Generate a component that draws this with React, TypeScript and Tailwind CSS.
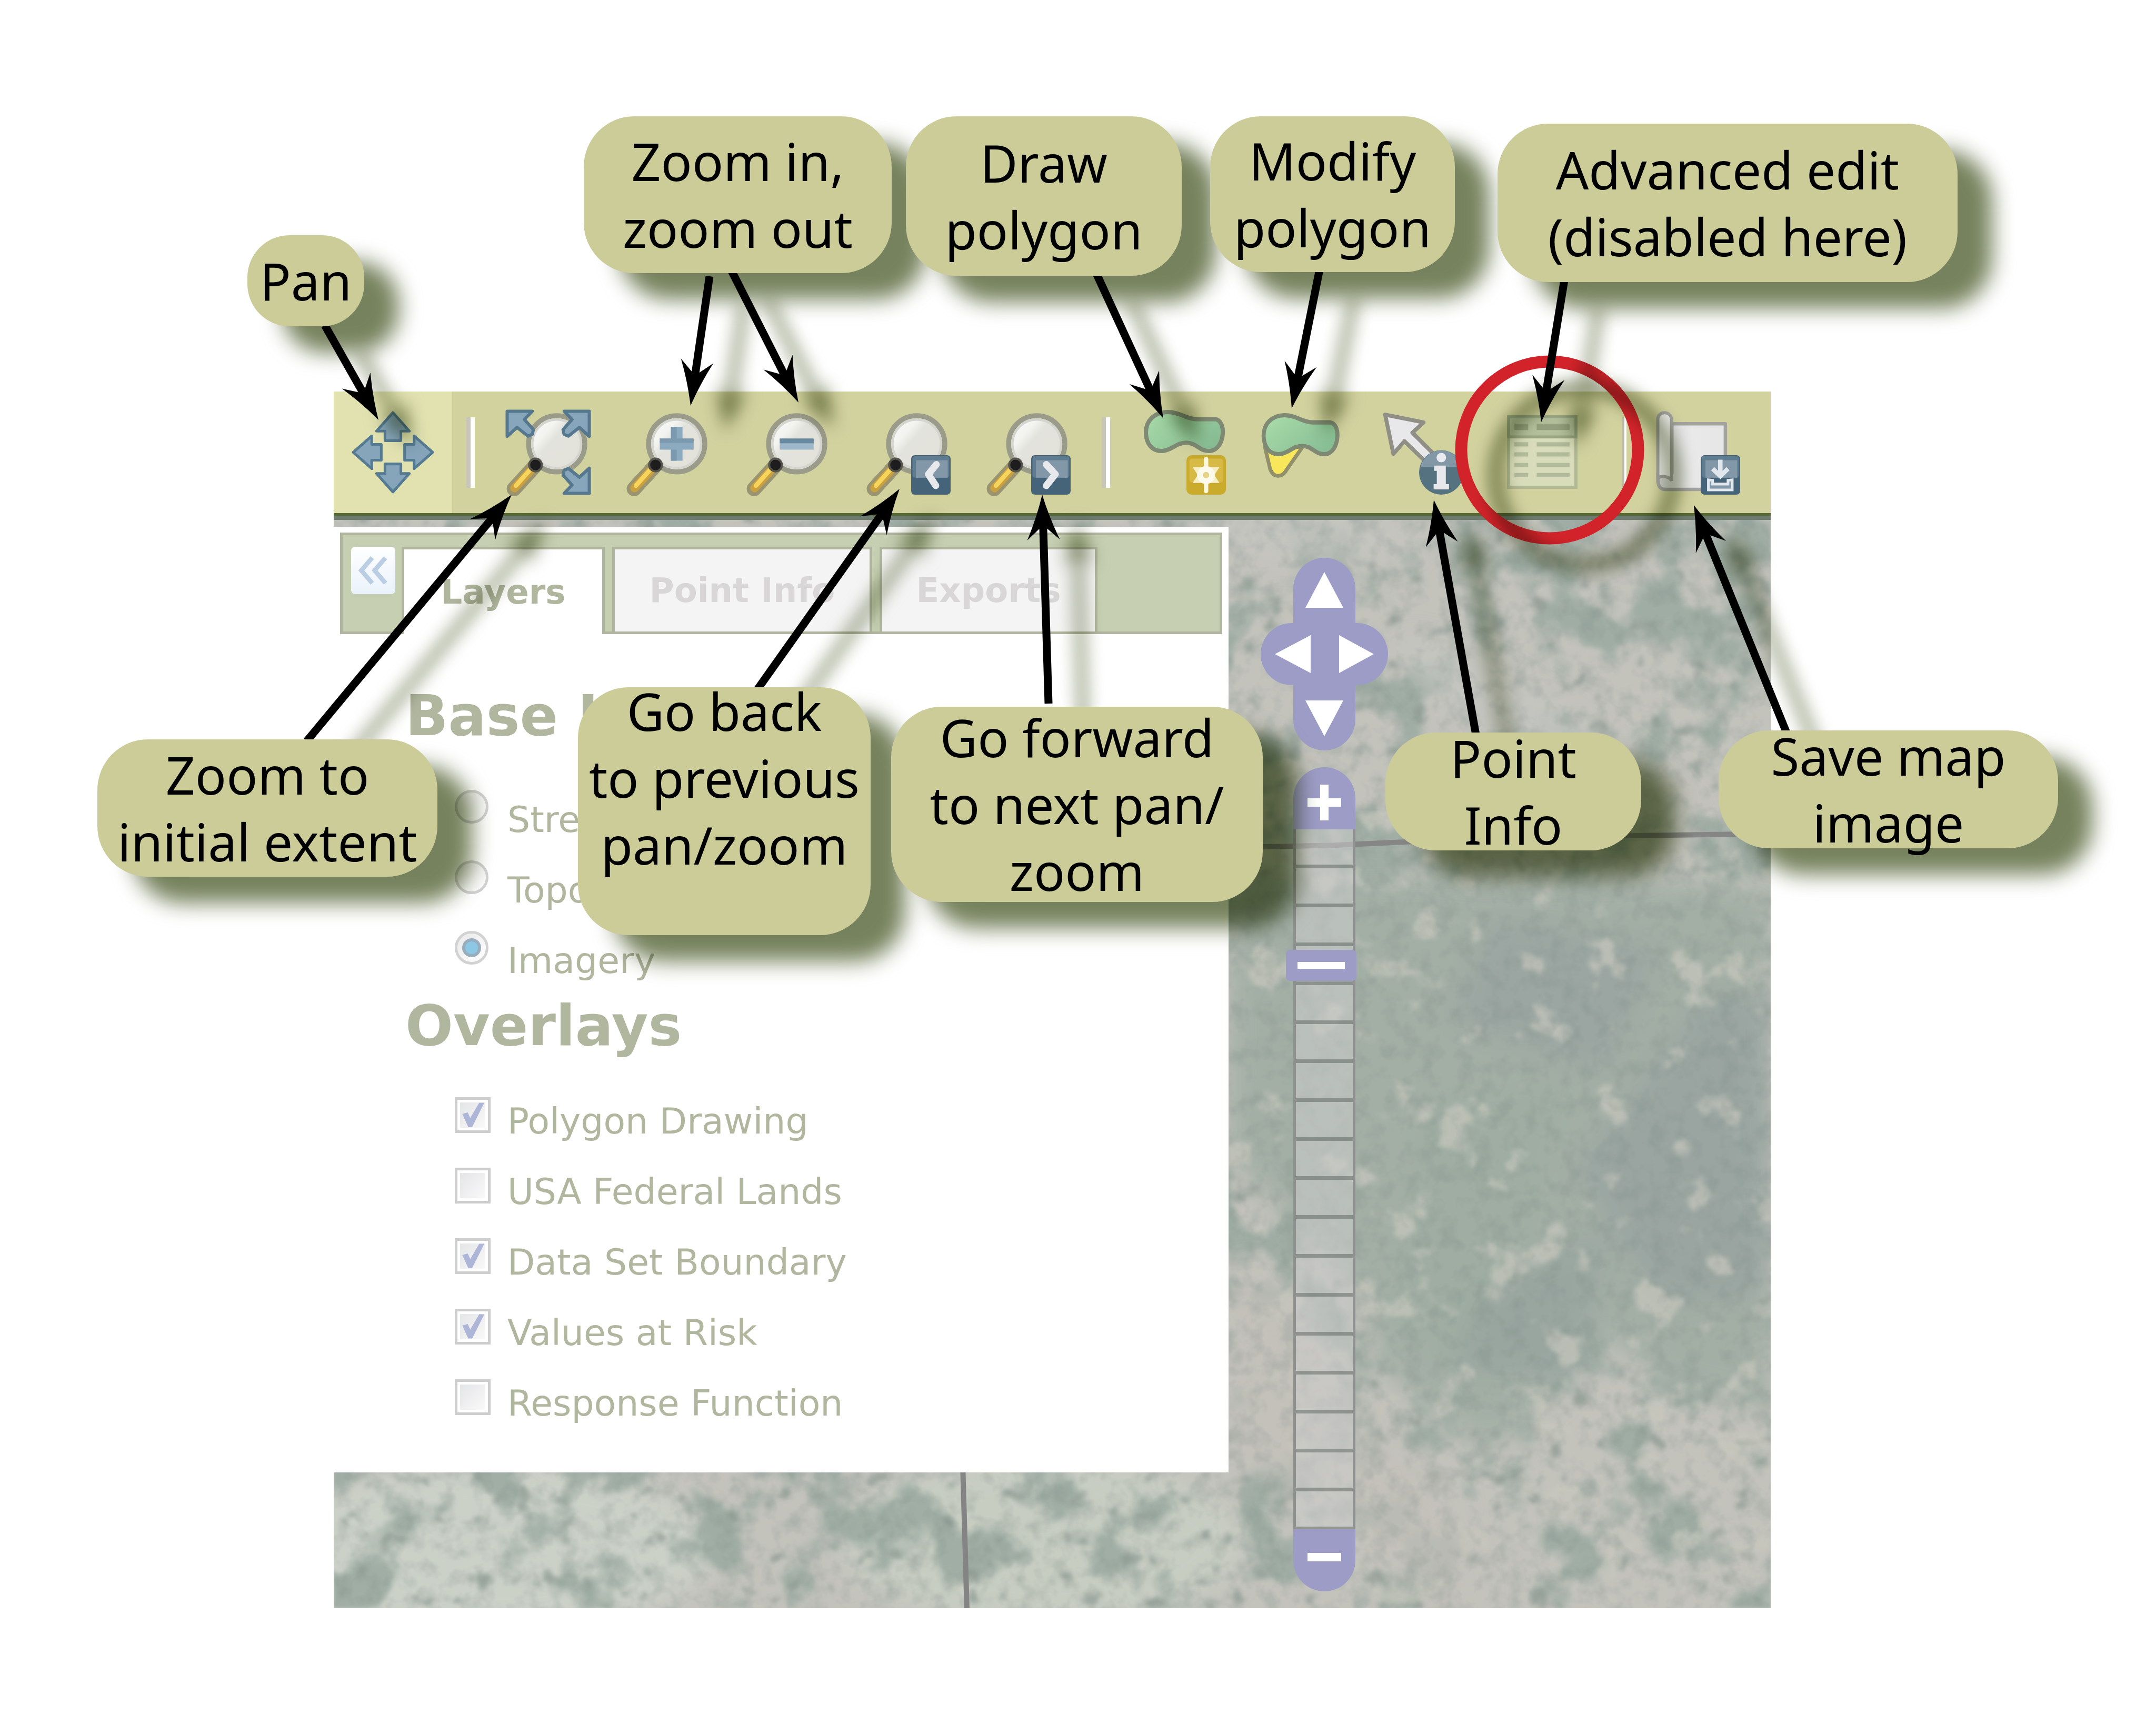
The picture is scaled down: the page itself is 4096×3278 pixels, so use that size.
import type { ReactNode } from "react";

/* ---------- toolbar icons (32 x 32 grid) ---------- */

function Icon({ children }: { children: ReactNode }) {
  return (
    <svg viewBox="0 0 32 32" className="size-[161px] overflow-visible" aria-hidden="true">
      {children}
    </svg>
  );
}

function Lens({ id }: { id: string }) {
  return (
    <>
      <defs>
        <linearGradient id={id} x1="0" y1="0.1" x2="0.9" y2="0.9">
          <stop offset="0.1" stopColor="#f6f8f6" />
          <stop offset="0.3" stopColor="#f3f4f0" />
          <stop offset="0.45" stopColor="#e2e3dc" />
          <stop offset="1" stopColor="#e2e2da" />
        </linearGradient>
      </defs>
      <path d="M10.6 21.6 L3.1 29.8" stroke="#9a9470" strokeWidth="5.6" strokeLinecap="round" />
      <path d="M9.8 22.4 L3.3 29.5" stroke="#c9a13f" strokeWidth="3.2" strokeLinecap="round" />
      <path d="M9 22.8 L3.8 28.6" stroke="#f7d45c" strokeWidth="1.7" strokeLinecap="round" />
      <circle cx="19.2" cy="12.8" r="10.6" fill={`url(#${id})`} stroke="#9b9b8a" strokeWidth="1.9" />
      <circle cx="19.2" cy="12.8" r="9.2" fill="none" stroke="#d4d5cf" strokeWidth="0.9" />
      <circle cx="11.2" cy="20.8" r="2.4" fill="#1d1d1d" stroke="#55544c" strokeWidth="0.8" />
    </>
  );
}

function PanIcon() {
  const arrow = "M16 1 L22.2 8 L19 8 L19 11.6 L13 11.6 L13 8 L9.8 8 Z";
  return (
    <Icon>
      <g fill="#86a5bb" stroke="#557b93" strokeWidth="1" strokeLinejoin="round">
        <path d={arrow} />
        <path d={arrow} transform="rotate(90 16 16)" />
        <path d={arrow} transform="rotate(180 16 16)" />
        <path d={arrow} transform="rotate(270 16 16)" />
      </g>
    </Icon>
  );
}

function ExtentIcon() {
  const corner = "M0.5 0.5 H10 L7 3.6 L10.4 7.4 L10 9.2 L8.4 9.9 L4.2 6.6 L0.5 10 Z";
  return (
    <Icon>
      <Lens id="lens-extent" />
      <g fill="#87a5bb" stroke="#55788f" strokeWidth="1.2" strokeLinejoin="round">
        <path d={corner} />
        <path d={corner} transform="translate(32 0) scale(-1 1)" />
        <path d={corner} transform="translate(32 32) scale(-1 -1)" />
      </g>
    </Icon>
  );
}

function ZoomInIcon() {
  return (
    <Icon>
      <Lens id="lens-in" />
      <path d="M17 6.4 H21.4 V10.8 H25.6 V15 H21.4 V19.2 H17 V15 H12.8 V10.8 H17 Z" fill="#8cabc1" />
      <path d="M17 6.4 H19.2 V10.8 H25.6 V12.4 H12.8 V10.8 H17 Z M17 15 H19.2 V19.2 H17 Z" fill="#7391a7" opacity="0.7" />
    </Icon>
  );
}

function ZoomOutIcon() {
  return (
    <Icon>
      <Lens id="lens-out" />
      <rect x="12.8" y="10.8" width="12.8" height="4.2" fill="#9fb8ca" />
      <rect x="12.8" y="10.8" width="12.8" height="1.8" fill="#68899f" />
    </Icon>
  );
}

function BadgeBox() {
  return (
    <>
      <rect x="17.1" y="17.1" width="14.9" height="14.9" rx="1.4" fill="#466479" />
      <rect x="17.6" y="17.4" width="13.9" height="8.2" rx="1" fill="#5f7c90" />
      <rect x="18.9" y="19" width="12" height="6.6" fill="#8298a8" />
    </>
  );
}

function PreviousIcon() {
  return (
    <Icon>
      <Lens id="lens-previous" />
      <BadgeBox />
      <path d="M26.6 20.6 L23.6 24.3 L26.4 28.6" fill="none" stroke="#e8e9ec" strokeWidth="2.6" strokeLinecap="round" strokeLinejoin="round" />
    </Icon>
  );
}

function NextIcon() {
  return (
    <Icon>
      <Lens id="lens-next" />
      <BadgeBox />
      <path d="M22.8 20.6 L26.2 24.3 L22.8 28.6" fill="none" stroke="#e8e9ec" strokeWidth="2.6" strokeLinecap="round" strokeLinejoin="round" />
    </Icon>
  );
}

const blob =
  "M1.8 9 C1.6 4 5 0.9 10 0.8 C14.6 0.8 17 3.4 21 3.5 L28 3.5 C30.4 3.8 31 7 30.8 9 C30.6 12 29 15.3 26 15.5 C22 15.7 21 12.4 17 12.4 C13 12.4 12 15.1 8 15.5 C4 15.7 2 12.6 1.8 9 Z";

function DrawPolygonIcon() {
  return (
    <Icon>
      <defs>
        <linearGradient id="blob-draw" x1="0" y1="0" x2="1" y2="0.6">
          <stop offset="0" stopColor="#a9dba9" />
          <stop offset="1" stopColor="#88bd94" />
        </linearGradient>
      </defs>
      <path d={blob} fill="url(#blob-draw)" stroke="#7f8a74" strokeWidth="1.6" />
      <rect x="17.1" y="17.1" width="14.9" height="14.9" rx="2" fill="#cbab2b" />
      <rect x="18.2" y="18.4" width="12.7" height="9" rx="1" fill="#dcc152" opacity="0.7" />
      <path d="M24.5 18.6 V30.6" stroke="#fbf7dc" strokeWidth="1.7" strokeLinecap="round" />
      <path d="M19.4 21.6 H29.6 L27.6 24.6 L29.6 27.6 H19.4 L21.4 24.6 Z" fill="#f6efc4" />
      <circle cx="24.5" cy="24.6" r="3.4" fill="#fcfaea" />
      <circle cx="24.5" cy="24.6" r="1.2" fill="#e4d287" />
    </Icon>
  );
}

function ModifyPolygonIcon() {
  return (
    <Icon>
      <defs>
        <linearGradient id="blob-modify" x1="0" y1="0" x2="1" y2="0.6">
          <stop offset="0" stopColor="#abdcaa" />
          <stop offset="1" stopColor="#88bf95" />
        </linearGradient>
      </defs>
      <path d="M1.4 14 L3.4 22.4 Q4.4 24.9 6.4 24.9 Q8.4 24.9 9.6 22.6 L15.6 14 Z" fill="#f8e75a" stroke="#92906a" strokeWidth="1.4" strokeLinejoin="round" />
      <path d={blob} transform="translate(-0.8 1.2) scale(0.96 1)" fill="url(#blob-modify)" stroke="#7f8a74" strokeWidth="1.6" />
    </Icon>
  );
}

function PointInfoIcon() {
  return (
    <Icon>
      <path d="M1.5 1.8 L16 4.7 L11.8 8.6 L20.6 17.4 L17.6 20.4 L8.8 11.8 L4.6 16.6 Z" fill="#e8e8ea" stroke="#908f86" strokeWidth="1.5" strokeLinejoin="round" />
      <circle cx="22.7" cy="23.6" r="8.4" fill="#54727f" />
      <path d="M14.8 21.6 A8.1 8.1 0 0 1 30.6 21.6 Z" fill="#8298a6" />
      <circle cx="22.7" cy="18" r="1.8" fill="#e9ebef" />
      <path d="M20 21 H24.4 V28 H25.6 V30 H19.8 V28 H21 V23 H20 Z" fill="#e6e8ec" />
    </Icon>
  );
}

function TableIcon() {
  return (
    <Icon>
      <g transform="translate(-0.4 0)">
        <rect x="3.2" y="2.6" width="25.4" height="26.6" fill="#d9dcba" stroke="#b0b894" strokeWidth="1.2" />
        <rect x="3.2" y="2.6" width="25.4" height="7.6" fill="#b4c09c" stroke="#98a582" strokeWidth="1.1" />
        <g fill="#93a07e">
          <rect x="5.4" y="5.2" width="5.2" height="2.4" />
          <rect x="13.8" y="5.2" width="12.4" height="2.4" />
        </g>
        <g fill="#b1ba9b">
          {[12.2, 16, 20, 23.8].map((y) => (
            <g key={y}>
              <rect x="5.4" y={y} width="5.2" height="1.6" />
              <rect x="13.8" y={y} width="12.4" height="1.6" />
            </g>
          ))}
        </g>
      </g>
    </Icon>
  );
}

function SaveImageIcon() {
  return (
    <Icon>
      <defs>
        <linearGradient id="sheet" x1="0" y1="0" x2="1" y2="0">
          <stop offset="0" stopColor="#d2d2d3" />
          <stop offset="0.5" stopColor="#e9e9ea" />
          <stop offset="1" stopColor="#e6e6e6" />
        </linearGradient>
      </defs>
      <path d="M3.6 30 C1.6 30 0.9 28.4 0.9 26 V24 H6.2 V5.2 H26.4 V30 Z" fill="url(#sheet)" stroke="#a3a3a0" strokeWidth="1.3" strokeLinejoin="round" />
      <path d="M0.9 26 V3.6 C0.9 0.2 5.9 0.2 6.1 3.6 V26.8 C5.4 25 1.6 24.6 0.9 26 Z" fill="#ececec" stroke="#a3a3a0" strokeWidth="1.2" />
      <BadgeBox />
      <path d="M24.5 18.8 V24.4 M21.6 22.2 L24.5 25 L27.4 22.2" fill="none" stroke="#dfe6ec" strokeWidth="1.7" />
      <path d="M20 26.4 V30.2 H29 V26.4 L27.4 26.6 V28 H21.6 V26.6 Z" fill="#7f97a8" stroke="#e3e8ec" strokeWidth="1" />
    </Icon>
  );
}

/* ---------- toolbar ---------- */

function ToolButton({ label, active, disabled, children }: { label: string; active?: boolean; disabled?: boolean; children: ReactNode }) {
  return (
    <button
      type="button"
      aria-label={label}
      disabled={disabled}
      className={active ? "flex h-full w-[225px] items-center justify-center bg-[#e2e2b1]" : "flex h-full w-[225px] items-center justify-center"}
    >
      {children}
    </button>
  );
}

function Separator({ slim }: { slim?: boolean }) {
  return (
    <div
      className={
        slim
          ? "mr-5 ml-[34px] h-[134px] w-2 border-r-4 border-white bg-[#bdb9a8]"
          : "mx-6 h-[134px] w-4 border-r-8 border-white bg-[#c9c5bb]"
      }
    />
  );
}

function Toolbar() {
  return (
    <div role="toolbar" aria-label="Map tools" className="flex h-[236px] items-center gap-[3px] border-b-5 border-[#586a35] bg-[#d2d29f]">
      <ToolButton label="Pan" active><PanIcon /></ToolButton>
      <Separator />
      <ToolButton label="Zoom to initial extent"><ExtentIcon /></ToolButton>
      <ToolButton label="Zoom in"><ZoomInIcon /></ToolButton>
      <ToolButton label="Zoom out"><ZoomOutIcon /></ToolButton>
      <ToolButton label="Previous view"><PreviousIcon /></ToolButton>
      <ToolButton label="Next view"><NextIcon /></ToolButton>
      <Separator />
      <ToolButton label="Draw polygon"><DrawPolygonIcon /></ToolButton>
      <ToolButton label="Modify polygon"><ModifyPolygonIcon /></ToolButton>
      <ToolButton label="Point info"><PointInfoIcon /></ToolButton>
      <ToolButton label="Advanced edit" disabled><TableIcon /></ToolButton>
      <Separator slim />
      <ToolButton label="Save map image"><SaveImageIcon /></ToolButton>
    </div>
  );
}

/* ---------- aerial imagery ---------- */

function Imagery() {
  return (
    <svg viewBox="0 0 2730 2075" preserveAspectRatio="xMidYMid slice" className="absolute inset-0 size-full" aria-hidden="true">
      <defs>
        <filter id="scrub" x="0" y="0" width="100%" height="100%" colorInterpolationFilters="sRGB">
          <feTurbulence type="fractalNoise" baseFrequency="0.007" numOctaves="6" seed="31" />
          <feColorMatrix values="0 0 0 0 0.61  0 0 0 0 0.67  0 0 0 0 0.635  7 0 0 0 -3.5" />
          <feGaussianBlur stdDeviation="3" />
        </filter>
        <filter id="dots" x="0" y="0" width="100%" height="100%" colorInterpolationFilters="sRGB">
          <feTurbulence type="fractalNoise" baseFrequency="0.026" numOctaves="3" seed="4" />
          <feColorMatrix values="0 0 0 0 0.56  0 0 0 0 0.61  0 0 0 0 0.58  0 7 0 0 -4.5" />
          <feGaussianBlur stdDeviation="4" />
        </filter>
        <filter id="clearings" x="0" y="0" width="100%" height="100%" colorInterpolationFilters="sRGB">
          <feTurbulence type="fractalNoise" baseFrequency="0.011" numOctaves="6" seed="57" />
          <feColorMatrix values="0 0 0 0 0.78  0 0 0 0 0.78  0 0 0 0 0.74  0 0 9 0 -5.5" />
          <feGaussianBlur stdDeviation="3" />
        </filter>
        <filter id="grain" x="0" y="0" width="100%" height="100%" colorInterpolationFilters="sRGB">
          <feTurbulence type="fractalNoise" baseFrequency="0.03" numOctaves="3" seed="8" />
          <feColorMatrix values="0 0 0 0 0.45  0 0 0 0 0.52  0 0 0 0 0.5  0 3 0 0 -1.35" />
        </filter>
        <filter id="soft" x="-20%" y="-20%" width="140%" height="140%">
          <feGaussianBlur stdDeviation="26" />
        </filter>
      </defs>
      <rect width="2730" height="2075" fill="#c3c3bc" />
      <g filter="url(#soft)">
        <ellipse cx="300" cy="1960" rx="420" ry="160" fill="#ccd1c8" />
        <ellipse cx="1350" cy="1950" rx="380" ry="160" fill="#c8cdc2" />
      </g>
      <rect width="2730" height="2075" filter="url(#scrub)" opacity="0.9" />
      <rect width="2730" height="2075" filter="url(#dots)" opacity="0.75" />
      <g filter="url(#soft)">
        <path d="M1750 1430 L1850 1500 L1960 1720 L2120 1850 L2180 2060 L2080 2075 L1900 1880 L1700 1800 L1700 1440 Z" fill="#c3c0b9" opacity="0.75" />
        <ellipse cx="2300" cy="420" rx="330" ry="60" fill="#c4c5c0" opacity="0.8" transform="rotate(32 2300 420)" />
        <ellipse cx="1840" cy="40" rx="220" ry="50" fill="#c6c5c0" opacity="0.8" />
        <path d="M1700 680 L2100 680 L2730 700 L2730 1700 L2520 1640 L2420 1560 L2200 1780 L2010 1640 L1900 1420 L1700 1220 Z" fill="#a3afa5" />
        <path d="M2200 760 L2520 820 L2420 1060 L2120 960 Z" fill="#9ba6a2" />
        <path d="M2600 920 L2730 900 L2730 1480 L2520 1500 L2360 1240 Z" fill="#9aa5a1" />
        <path d="M2080 1120 L2330 1080 L2200 1640 L2020 1520 Z" fill="#9fada2" />
        <path d="M2180 1480 L2420 1350 L2360 1640 L2120 1620 Z" fill="#99a6a0" />
      </g>
      <rect x="1700" y="560" width="1030" height="1515" filter="url(#clearings)" opacity="0.7" />
      <rect width="2730" height="2075" filter="url(#grain)" opacity="0.2" />
      <path d="M1700 630 L1900 626 L2090 617 L2300 610 L2730 604" fill="none" stroke="#868686" strokeWidth="10" />
      <path d="M1195 1800 L1203 2075" fill="none" stroke="#848484" strokeWidth="10" />
    </svg>
  );
}

/* ---------- layer panel ---------- */

const baseLayers = [
  { name: "Streets", checked: false },
  { name: "Topo", checked: false },
  { name: "Imagery", checked: true },
];

const overlays = [
  { name: "Polygon Drawing", checked: true },
  { name: "USA Federal Lands", checked: false },
  { name: "Data Set Boundary", checked: true },
  { name: "Values at Risk", checked: true },
  { name: "Response Function", checked: false },
];

function LayerPanel() {
  return (
    <aside className="w-[1700px] shrink-0 bg-white px-3 pt-[11px] pb-[81px] font-['Verdana','DejaVu_Sans',sans-serif] text-[#b1b69f]">
      <div className="flex h-[193px] items-start gap-3 border-5 border-[#b0b59f] bg-[#c6cfb2] pt-[22px] pl-4">
        <button type="button" aria-label="Collapse panel" className="flex h-[90px] w-[84px] items-center justify-center rounded-lg bg-linear-to-b from-white to-[#eaf2fb]">
          <svg viewBox="0 0 16 16" className="size-[72px]" fill="none" stroke="#b9cde3" strokeWidth="1.9" aria-hidden="true">
            <path d="M7.6 2.6 L3 8 L7.6 13.4 M13.2 2.6 L8.6 8 L13.2 13.4" />
          </svg>
        </button>
        <div role="tablist" className="flex gap-[14px] text-[64px] leading-[76px] font-bold">
          <button type="button" role="tab" aria-selected="true" className="h-[166px] w-[386px] border-x-5 border-t-5 border-[#b0b59f] bg-white">Layers</button>
          <button type="button" role="tab" aria-selected="false" className="h-[161px] w-[494px] border-x-5 border-t-5 border-[#b0b59f] bg-[#f4f4f4] text-[#d8d6d6]">Point Info</button>
          <button type="button" role="tab" aria-selected="false" className="h-[161px] w-[414px] border-x-5 border-t-5 border-[#b0b59f] bg-[#f4f4f4] text-[#d8d6d6]">Exports</button>
        </div>
      </div>

      <div className="pl-[124px]">
        <h2 className="mt-[91px] text-[107px] leading-[128px] font-bold">Base Layers</h2>
        <div className="mt-[77px] flex flex-col gap-[38px] pl-[94px] text-[68px] leading-[76px]">
          {baseLayers.map((layer) => (
            <label key={layer.name} className="flex h-24 items-start gap-8">
              <span className="grid w-[68px]">
                <input type="radio" name="base" defaultChecked={layer.checked} className="peer col-start-1 row-start-1 size-16 appearance-none rounded-full border-5 border-[#d2d2d2] bg-linear-to-br from-[#e9e9e9] to-white" />
                <span className="pointer-events-none col-start-1 row-start-1 m-[14px] hidden size-9 rounded-full border-6 border-[#98adbd] bg-[#8cc8e6] peer-checked:block" />
              </span>
              <span className="pt-[19px]">{layer.name}</span>
            </label>
          ))}
        </div>

        <h2 className="mt-5 text-[107px] leading-[128px] font-bold">Overlays</h2>
        <div className="mt-[72px] flex flex-col gap-[38px] pl-[94px] text-[68px] leading-[76px]">
          {overlays.map((layer) => (
            <label key={layer.name} className="flex h-24 items-start gap-8">
              <span className="grid w-[68px]">
                <input type="checkbox" defaultChecked={layer.checked} className="peer col-start-1 row-start-1 size-[68px] appearance-none border-5 border-[#cdcdcd] bg-linear-to-br from-[#e2e3e5] to-[#fbfbfb] ring-5 ring-white ring-inset" />
                <svg viewBox="0 0 13 13" className="pointer-events-none col-start-1 row-start-1 hidden size-[68px] peer-checked:block" aria-hidden="true">
                  <path d="M3 6.2 L4.6 5.8 L5.6 8 L9 2.2 L10.4 2.2 L6.2 10.6 L5 10.6 Z" fill="#aeb6d8" stroke="#aeb6d8" strokeWidth="0.4" />
                </svg>
              </span>
              <span className="pt-2">{layer.name}</span>
            </label>
          ))}
        </div>
      </div>
    </aside>
  );
}

/* ---------- pan and zoom control ---------- */

function ZoomControl() {
  return (
    <div className="ml-[61px] flex w-[242px] flex-col items-center pt-[59px]">
      <svg viewBox="0 0 242 366" className="h-[366px] w-[242px]" aria-label="Pan map">
        <rect x="62" y="0" width="118" height="366" rx="59" fill="#9c9cc6" />
        <rect x="0" y="124" width="242" height="118" rx="59" fill="#9c9cc6" />
        <g fill="#ffffff">
          <path d="M121 27 L157 95 H85 Z" />
          <path d="M121 339 L157 271 H85 Z" />
          <path d="M27 183 L95 147 V219 Z" />
          <path d="M215 183 L149 147 V219 Z" />
        </g>
      </svg>
      <button type="button" aria-label="Zoom in" className="mt-8 flex h-[118px] w-[118px] items-center justify-center rounded-t-full bg-[#9c9cc6] pt-4">
        <svg viewBox="0 0 68 68" className="size-[68px]" fill="#ffffff" aria-hidden="true">
          <path d="M26 0 H42 V26 H66 V42 H42 V68 H26 V42 H2 V26 H26 Z" />
        </svg>
      </button>
      <input
        type="range"
        aria-label="Zoom level"
        min={0}
        max={100}
        defaultValue={18}
        className="h-[1330px] w-[118px] appearance-none border-y-5 border-[#8f9090] bg-[repeating-linear-gradient(to_bottom,rgba(205,205,205,0.55)_0px,rgba(205,205,205,0.55)_67px,rgba(130,135,132,0.75)_67px,rgba(130,135,132,0.75)_74px)] [writing-mode:vertical-lr] [&::-webkit-slider-thumb]:-ml-[13px] [&::-webkit-slider-thumb]:h-[59px] [&::-webkit-slider-thumb]:w-[134px] [&::-webkit-slider-thumb]:appearance-none [&::-webkit-slider-thumb]:rounded-lg [&::-webkit-slider-thumb]:border-x-23 [&::-webkit-slider-thumb]:border-y-22 [&::-webkit-slider-thumb]:border-[#9c9cc6] [&::-webkit-slider-thumb]:bg-white"
      />
      <button type="button" aria-label="Zoom out" className="flex h-[118px] w-[118px] items-center justify-center rounded-b-full bg-[#9c9cc6]">
        <span className="mb-3 h-4 w-16 bg-white" />
      </button>
    </div>
  );
}

/* ---------- annotations ---------- */

const callouts = [
  { box: "left-[470px] top-[447px] h-[173px] w-[222px] rounded-[80px]", lines: ["Pan"] },
  { box: "left-[1109px] top-[221px] h-[298px] w-[585px] rounded-[96px]", lines: ["Zoom in,", "zoom out"] },
  { box: "left-[1721px] top-[221px] h-[303px] w-[524px] rounded-[96px]", lines: ["Draw", "polygon"] },
  { box: "left-[2299px] top-[221px] h-[296px] w-[465px] rounded-[96px]", lines: ["Modify", "polygon"] },
  { box: "left-[2845px] top-[235px] h-[301px] w-[874px] rounded-[96px]", lines: ["Advanced edit", "(disabled here)"] },
  { box: "left-[185px] top-[1405px] h-[261px] w-[646px] rounded-[96px]", lines: ["Zoom to", "initial extent"] },
  { box: "left-[1098px] top-[1306px] h-[471px] w-[556px] rounded-[96px]", lines: ["Go back", "to previous", "pan/zoom", "\u00a0"] },
  { box: "left-[1693px] top-[1343px] h-[371px] w-[706px] rounded-[96px]", lines: ["Go forward", "to next pan/", "zoom"] },
  { box: "left-[2632px] top-[1392px] h-[224px] w-[486px] rounded-[96px]", lines: ["Point", "Info"] },
  { box: "left-[3265px] top-[1388px] h-[224px] w-[645px] rounded-[96px]", lines: ["Save map", "image"] },
];

const arrows = [
  [617, 618, 719, 798],
  [1348, 525, 1312, 771],
  [1390, 515, 1517, 765],
  [2083, 520, 2210, 795],
  [2507, 512, 2454, 776],
  [2972, 532, 2928, 802],
  [583, 1408, 972, 940],
  [1439, 1310, 1709, 929],
  [1992, 1337, 1980, 940],
  [2804, 1396, 2724, 950],
  [3394, 1392, 3218, 960],
];

function Arrow({ from }: { from: number[] }) {
  const [x1, y1, x2, y2] = from;
  const length = Math.hypot(x2 - x1, y2 - y1);
  const angle = (Math.atan2(y2 - y1, x2 - x1) * 180) / Math.PI;
  return (
    <g transform={`translate(${x2} ${y2}) rotate(${angle})`}>
      <path d={`M${-length} 0 H-50`} strokeWidth="15" />
      <path d="M0 0 Q-44 -12 -86 -31 L-58 0 L-86 31 Q-44 12 0 0 Z" stroke="none" />
    </g>
  );
}

function Annotations() {
  return (
    <>
      <svg className="pointer-events-none absolute inset-0 size-full" aria-hidden="true">
        <circle cx="2944" cy="855" r="168" fill="none" stroke="#d2232a" strokeWidth="23" />
      </svg>
      <div className="pointer-events-none absolute inset-0 overflow-hidden mix-blend-multiply" aria-hidden="true">
        <svg className="absolute inset-0 size-full translate-x-[66px] translate-y-[50px] overflow-visible blur-[16px]">
          <g stroke="#79845f" fill="#79845f">
            {arrows.map((a) => (
              <Arrow key={a.join()} from={a} />
            ))}
          </g>
          <circle cx="2944" cy="855" r="168" fill="none" stroke="#79845f" strokeWidth="24" />
        </svg>
        {callouts.map((c) => (
          <div key={c.box} className={`absolute translate-x-[66px] translate-y-[50px] bg-[#76825d] blur-[20px] ${c.box}`} />
        ))}
      </div>
      <svg className="pointer-events-none absolute inset-0 size-full" stroke="#000000" fill="#000000" aria-hidden="true">
        {arrows.map((a) => (
          <Arrow key={a.join()} from={a} />
        ))}
      </svg>
      {callouts.map((c) => (
        <p
          key={c.box}
          className={`absolute flex flex-col items-center justify-center bg-[#cccc99] font-['Noto_Sans',sans-serif] text-[98px] leading-[127px] whitespace-nowrap text-black ${c.box}`}
        >
          {c.lines.map((line) => (
            <span key={line}>{line}</span>
          ))}
        </p>
      ))}
    </>
  );
}

export default function App() {
  return (
    <main className="relative isolate min-h-screen bg-white pt-[744px] pr-[732px] pb-[223px] pl-[634px]">
      <Toolbar />
      <section aria-label="Map" className="relative flex items-start pb-8">
        <Imagery />
        <div className="absolute inset-x-0 top-0 h-2 bg-[#6d7c6e]" />
        <div className="relative flex items-start">
          <div className="mt-[21px]">
            <LayerPanel />
          </div>
          <div className="mt-[21px]">
            <ZoomControl />
          </div>
        </div>
      </section>
      <Annotations />
    </main>
  );
}
